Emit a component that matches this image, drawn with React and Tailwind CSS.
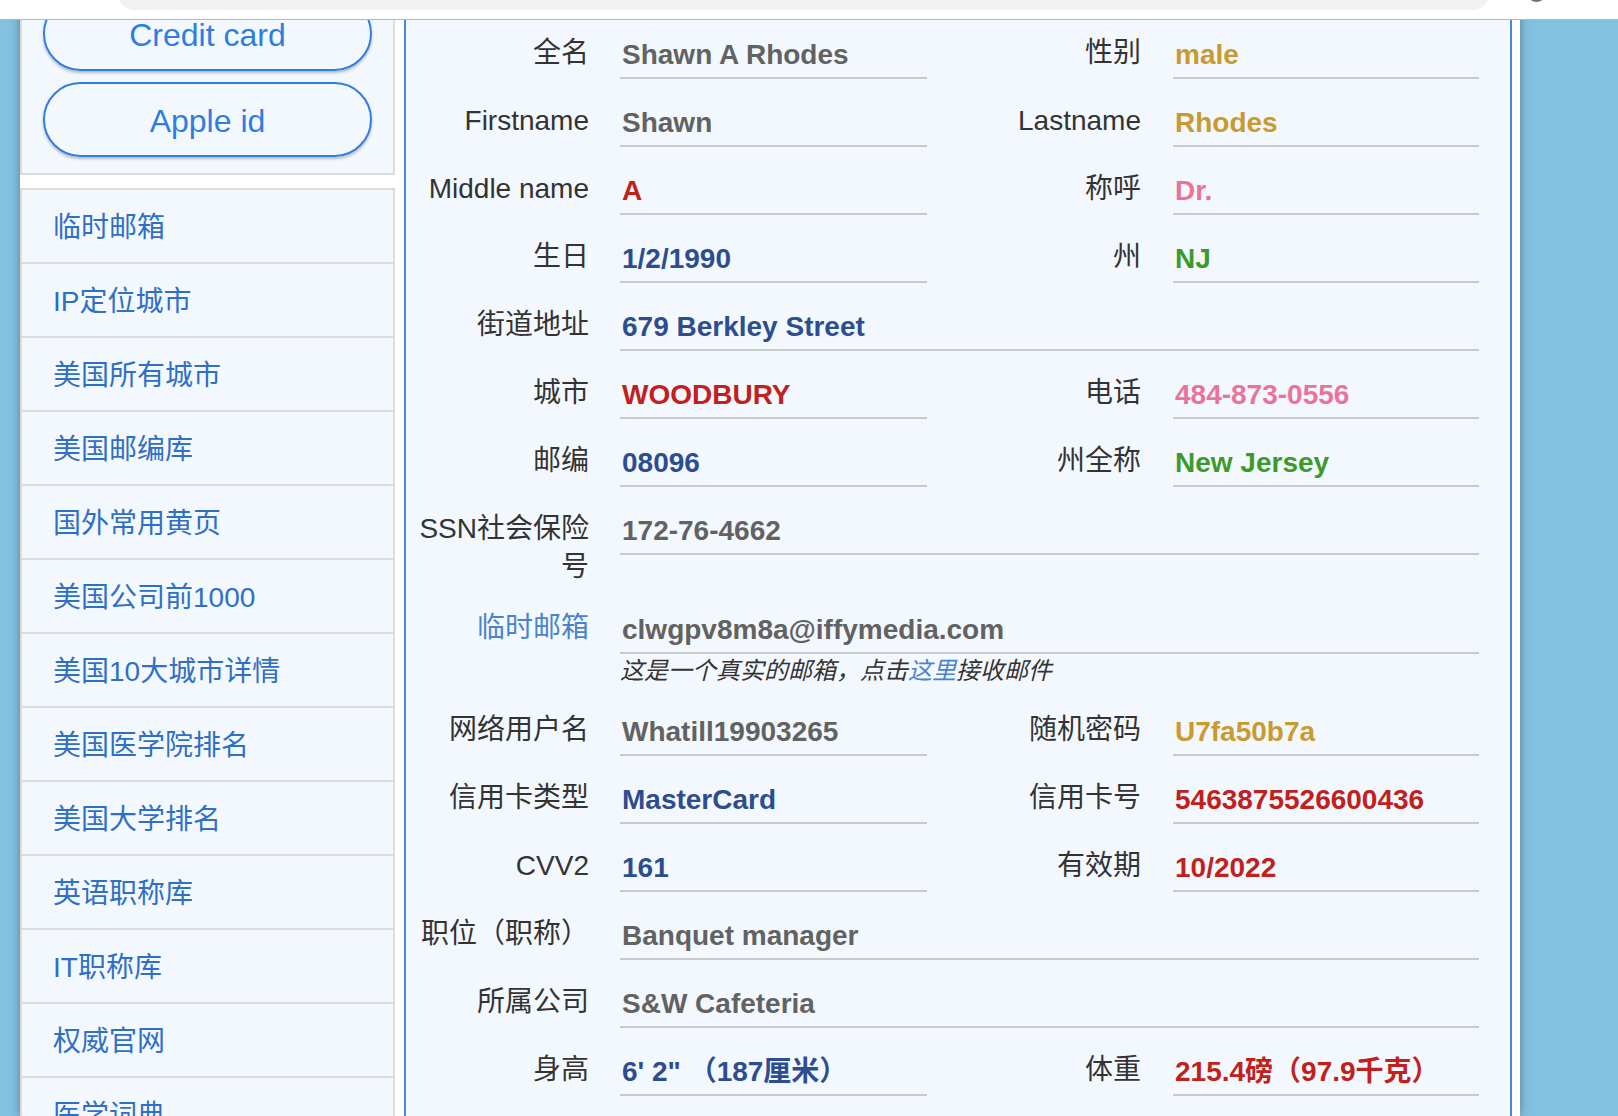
import React from "react";

const FONT = { fontFamily: '"Liberation Sans", Arial, "Noto Sans CJK SC", sans-serif' };

const GREY = "text-[#626262]";
const GOLD = "text-[#c99a30]";
const RED = "text-[#c1211c]";
const PINK = "text-[#ea7399]";
const NAVY = "text-[#2d4e8e]";
const GREEN = "text-[#3d9a2a]";

const menu = [
  "临时邮箱",
  "IP定位城市",
  "美国所有城市",
  "美国邮编库",
  "国外常用黄页",
  "美国公司前1000",
  "美国10大城市详情",
  "美国医学院排名",
  "美国大学排名",
  "英语职称库",
  "IT职称库",
  "权威官网",
  "医学词典",
  "美国银行",
];

const rows = [
  { l: "全名", v: "Shawn A Rhodes", c: GREY, l2: "性别", v2: "male", c2: GOLD },
  { l: "Firstname", v: "Shawn", c: GREY, l2: "Lastname", v2: "Rhodes", c2: GOLD },
  { l: "Middle name", v: "A", c: RED, l2: "称呼", v2: "Dr.", c2: PINK },
  { l: "生日", v: "1/2/1990", c: NAVY, l2: "州", v2: "NJ", c2: GREEN },
  { l: "街道地址", v: "679 Berkley Street", c: NAVY },
  { l: "城市", v: "WOODBURY", c: RED, l2: "电话", v2: "484-873-0556", c2: PINK },
  { l: "邮编", v: "08096", c: NAVY, l2: "州全称", v2: "New Jersey", c2: GREEN },
  { l: "SSN社会保险号", v: "172-76-4662", c: GREY },
  { email: true },
  { l: "网络用户名", v: "Whatill19903265", c: GREY, l2: "随机密码", v2: "U7fa50b7a", c2: GOLD },
  { l: "信用卡类型", v: "MasterCard", c: NAVY, l2: "信用卡号", v2: "5463875526600436", c2: RED },
  { l: "CVV2", v: "161", c: NAVY, l2: "有效期", v2: "10/2022", c2: RED },
  { l: "职位（职称）", v: "Banquet manager", c: GREY },
  { l: "所属公司", v: "S&W Cafeteria", c: GREY },
  { l: "身高", v: "6' 2\" （187厘米）", c: NAVY, l2: "体重", v2: "215.4磅（97.9千克）", c2: RED },
];

function Value({ text, color, wide }) {
  return (
    <div
      className={`${wide ? "w-[859px]" : "w-[307px]"} ml-[31px] pt-[17px] pb-[4px] pl-[2px] leading-[36px] text-[28px] font-bold border-b-2 border-[#c9c9c9] whitespace-nowrap ${color}`}
    >
      {text}
    </div>
  );
}

function Row({ row }) {
  if (row.email) {
    return (
      <div className="flex items-start mb-[9px]">
        <div className="w-[183px] shrink-0 text-right pt-[14px] leading-[38px] text-[28px] text-[#4a84c8]">临时邮箱</div>
        <div className="ml-[31px] w-[859px]">
          <div className={`pt-[17px] pb-[4px] pl-[2px] leading-[36px] text-[28px] font-bold border-b-2 border-[#c9c9c9] ${GREY}`}>
            clwgpv8m8a@iffymedia.com
          </div>
          <div className="leading-[34px] text-[24px] italic text-[#333]">
            这是一个真实的邮箱，点击<span className="text-[#4a84c8]">这里</span>接收邮件
          </div>
        </div>
      </div>
    );
  }
  return (
    <div className="flex items-start mb-[9px]">
      <div className="w-[183px] shrink-0 text-right pt-[14px] leading-[38px] text-[28px] text-[#333]">{row.l}</div>
      {row.l2 ? (
        <>
          <Value text={row.v} color={row.c} />
          <div className="w-[214px] shrink-0 text-right pt-[14px] leading-[38px] text-[28px] text-[#333]">{row.l2}</div>
          <div
            className={`w-[306px] ml-[32px] pt-[17px] pb-[4px] pl-[2px] leading-[36px] text-[28px] font-bold border-b-2 border-[#c9c9c9] whitespace-nowrap ${row.c2}`}
          >
            {row.v2}
          </div>
        </>
      ) : (
        <Value text={row.v} color={row.c} wide />
      )}
    </div>
  );
}

export default function App() {
  return (
    <div className="relative w-full h-screen overflow-hidden bg-[#83c1e0]" style={FONT}>
      {/* top bar over the scrolled page */}
      <div className="absolute inset-x-0 top-0 h-[20px] bg-white border-b border-[#b9b9b9] z-10 overflow-hidden">
        <div className="absolute left-[117px] right-[128px] top-[-20px] h-[30px] rounded-b-[18px] bg-[#f0f1f3]"></div>
        <div className="absolute left-[1527px] top-[-17px] w-[19px] h-[19px] rounded-full bg-[#66727c]"></div>
      </div>

      <div className="ml-[20px] w-[1500px] h-[1116px] bg-white flex shadow-[0_0_9px_rgba(0,0,0,0.35)]">
        {/* sidebar */}
        <div className="w-[375px] shrink-0 -mt-[22px]">
          <div className="border-2 border-[#dcdcdc] bg-[#f3f8fe] pt-[16px] pb-[16px] px-[21px]">
            <div className="h-[75px] pt-[2px] rounded-full border-2 border-[#2e7de1] flex items-center justify-center text-[32px] text-[#2e7de1] shadow-[0_2px_3px_rgba(0,0,0,0.25)]">
              Credit card
            </div>
            <div className="mt-[11px] h-[75px] pt-[2px] rounded-full border-2 border-[#2e7de1] flex items-center justify-center text-[32px] text-[#2e7de1] shadow-[0_2px_3px_rgba(0,0,0,0.25)]">
              Apple id
            </div>
          </div>
          <div className="mt-[13px] border-x-2 border-t-2 border-[#dcdcdc] bg-[#f3f8fe]">
            {menu.map((m) => (
              <div
                key={m}
                className="h-[74px] pt-[3px] border-b-2 border-[#dcdcdc] flex items-center pl-[31px] text-[28px] text-[#2f6fc4]"
              >
                {m}
              </div>
            ))}
          </div>
        </div>

        {/* main panel */}
        <div className="ml-[9px] w-[1108px] shrink-0 border-x-2 border-[#4a89d4] bg-[#f3f8fe] pt-[20px]">
          {rows.map((r, i) => (
            <Row key={i} row={r} />
          ))}
        </div>
      </div>
    </div>
  );
}
